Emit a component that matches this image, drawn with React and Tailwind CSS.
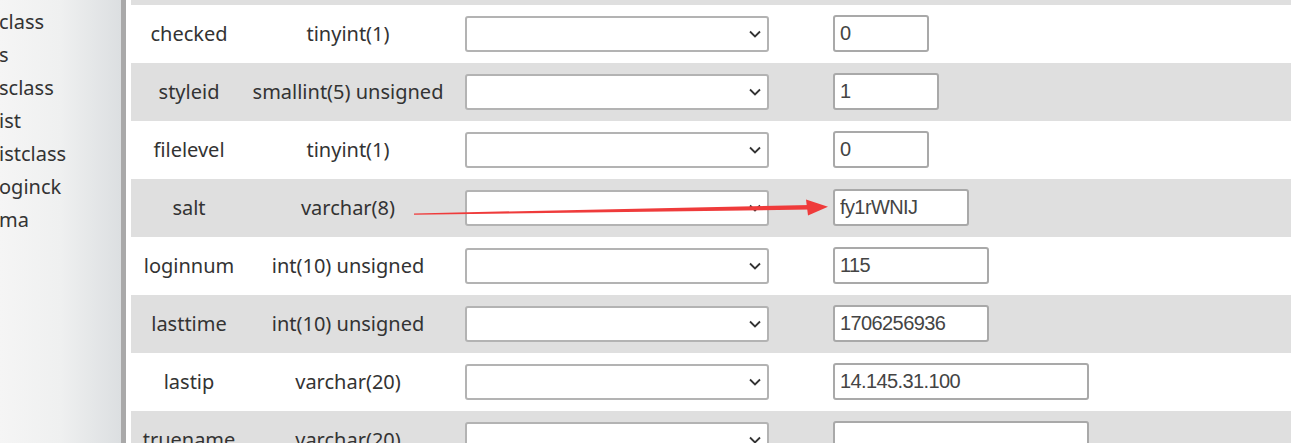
import React from "react";

const rows = [
  { name: "checked", type: "tinyint(1)", value: "0", w: "w-[96px]" },
  { name: "styleid", type: "smallint(5) unsigned", value: "1", w: "w-[106px]" },
  { name: "filelevel", type: "tinyint(1)", value: "0", w: "w-[96px]" },
  { name: "salt", type: "varchar(8)", value: "fy1rWNIJ", w: "w-[136px]" },
  { name: "loginnum", type: "int(10) unsigned", value: "115", w: "w-[156px]" },
  { name: "lasttime", type: "int(10) unsigned", value: "1706256936", w: "w-[156px]" },
  { name: "lastip", type: "varchar(20)", value: "14.145.31.100", w: "w-[256px]" },
  { name: "truename", type: "varchar(20)", value: "", w: "w-[256px]" },
];

const side = ["class", "s", "sclass", "ist", "istclass", "oginck", "ma"];

function Chevron() {
  return (
    <svg
      className="absolute right-[8px] top-[14px] pointer-events-none"
      width="12"
      height="8"
      viewBox="0 0 12 8"
      fill="none"
    >
      <path d="M1 1.5 L6 6.5 L11 1.5" stroke="#333" strokeWidth="1.8" />
    </svg>
  );
}

function Row({ r, i }) {
  const bg = i % 2 === 1 ? "bg-[#dfdfdf]" : "bg-white";
  return (
    <div className={`flex items-center shrink-0 h-[58px] ${bg}`}>
      <div className="w-[116px] text-center">{r.name}</div>
      <div className="w-[202px] text-center whitespace-nowrap">{r.type}</div>
      <div className="relative ml-[16px] w-[304px] h-[36px]">
        <select className="appearance-none w-full h-full bg-white border-2 border-[#b3b3b3] rounded-[3px] outline-none"></select>
        <Chevron />
      </div>
      <input
        readOnly
        value={r.value}
        className={`ml-[64px] ${r.w} h-[37px] -mt-[1px] border-2 border-[#a9a9a9] rounded-[3px] bg-white pl-[5px] text-[#444] text-[20px] outline-none tracking-[-0.6px]`}
        style={{ fontFamily: '"Liberation Sans", Arial, sans-serif' }}
      />
    </div>
  );
}

export default function App() {
  return (
    <div
      className="relative w-[1291px] h-[443px] overflow-hidden flex bg-white text-[20px] text-[#333]"
      style={{ fontFamily: '"Noto Sans", "Open Sans", sans-serif' }}
    >
      <div className="w-[121px] shrink-0 bg-gradient-to-r from-[#f5f5f5] via-[#eff0f0] to-[#dcdfe1] pt-[5px] leading-[33px]">
        {side.map((s) => (
          <div key={s} className="whitespace-nowrap -ml-[1px]">
            {s}
          </div>
        ))}
      </div>
      <div className="w-[5px] shrink-0 bg-[#a9a9a9]" />
      <div className="w-[5px] shrink-0 bg-white" />
      <div className="flex-1 flex flex-col">
        <div className="h-[5px] bg-[#dfdfdf] shrink-0" />
        {rows.map((r, i) => (
          <Row key={r.name} r={r} i={i} />
        ))}
      </div>
      <svg
        className="absolute inset-0 pointer-events-none"
        width="1291"
        height="443"
        viewBox="0 0 1291 443"
      >
        <polygon
          points="414,213.4 810,205 810,209.6 414,214.8"
          fill="#ef3b3b"
        />
        <polygon points="806,199.5 828,206.8 808,215.5" fill="#ef3b3b" />
      </svg>
    </div>
  );
}
